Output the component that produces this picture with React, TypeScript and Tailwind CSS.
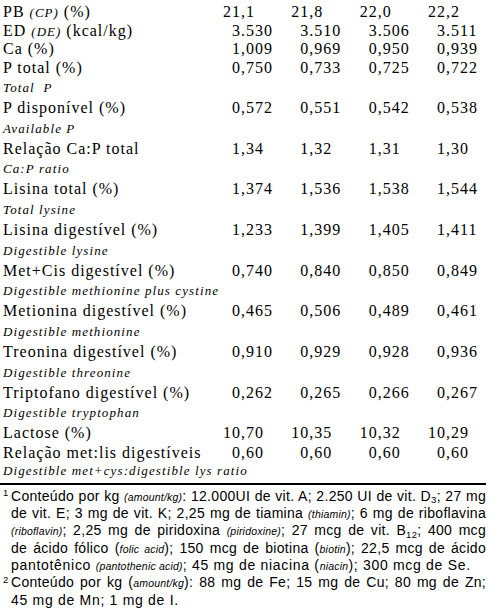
import React from "react";

type Row =
  | { t: "m"; label: React.ReactNode; v: string[]; h: string }
  | { t: "e"; text: string; h: string };

const I = ({ children }: { children: React.ReactNode }) => (
  <span className="italic text-[13px]">{children}</span>
);

const rows: Row[] = [
  { t: "m", label: <>PB <I>(CP)</I> (%)</>, v: ["21,1", "21,8", "22,0", "22,2"], h: "h-[18.5px]" },
  { t: "m", label: <>ED <I>(DE)</I> (kcal/kg)</>, v: ["3.530", "3.510", "3.506", "3.511"], h: "h-[18.5px]" },
  { t: "m", label: <>Ca (%)</>, v: ["1,009", "0,969", "0,950", "0,939"], h: "h-[18.5px]" },
  { t: "m", label: <>P total (%)</>, v: ["0,750", "0,733", "0,725", "0,722"], h: "h-[19px]" },
  { t: "e", text: "Total\u00a0 P", h: "h-[20.33px]" },
  { t: "m", label: <>P disponível (%)</>, v: ["0,572", "0,551", "0,542", "0,538"], h: "h-[20.33px]" },
  { t: "e", text: "Available P", h: "h-[20.33px]" },
  { t: "m", label: <>Relação Ca:P total</>, v: ["1,34", "1,32", "1,31", "1,30"], h: "h-[20.33px]" },
  { t: "e", text: "Ca:P ratio", h: "h-[20.33px]" },
  { t: "m", label: <>Lisina total (%)</>, v: ["1,374", "1,536", "1,538", "1,544"], h: "h-[20.33px]" },
  { t: "e", text: "Total lysine", h: "h-[20.33px]" },
  { t: "m", label: <>Lisina digestível (%)</>, v: ["1,233", "1,399", "1,405", "1,411"], h: "h-[20.33px]" },
  { t: "e", text: "Digestible lysine", h: "h-[20.33px]" },
  { t: "m", label: <>Met+Cis digestível (%)</>, v: ["0,740", "0,840", "0,850", "0,849"], h: "h-[20.33px]" },
  { t: "e", text: "Digestible methionine plus cystine", h: "h-[20.33px]" },
  { t: "m", label: <>Metionina digestível (%)</>, v: ["0,465", "0,506", "0,489", "0,461"], h: "h-[20.33px]" },
  { t: "e", text: "Digestible methionine", h: "h-[20.33px]" },
  { t: "m", label: <>Treonina digestível (%)</>, v: ["0,910", "0,929", "0,928", "0,936"], h: "h-[20.33px]" },
  { t: "e", text: "Digestible threonine", h: "h-[20.33px]" },
  { t: "m", label: <>Triptofano digestível (%)</>, v: ["0,262", "0,265", "0,266", "0,267"], h: "h-[20.33px]" },
  { t: "e", text: "Digestible tryptophan", h: "h-[20.33px]" },
  { t: "m", label: <>Lactose (%)</>, v: ["10,70", "10,35", "10,32", "10,29"], h: "h-[20.33px]" },
  { t: "m", label: <>Relação met:lis digestíveis</>, v: ["0,60", "0,60", "0,60", "0,60"], h: "h-[19px]" },
  { t: "e", text: "Digestible met+cys:digestible lys ratio", h: "h-[17px]" },
];

function Val({ v }: { v: string }) {
  const i = v.search(/[.,]/);
  return (
    <div className="flex">
      <span className="w-[20px] text-right">{v.slice(0, i)}</span>
      <span>{v.slice(i)}</span>
    </div>
  );
}

const FI = ({ children }: { children: React.ReactNode }) => (
  <span className="italic text-[10.5px] tracking-[0.2px]">{children}</span>
);

function FLine({ sup, last, children }: { sup?: string; last?: boolean; children: React.ReactNode }) {
  return (
    <div className="flex h-[17.33px] items-center pr-[5px]">
      <span className="w-[11px] shrink-0 self-start pl-[3px] pt-[1px] text-[9.5px] leading-none">{sup}</span>
      <div
        className={
          last
            ? "flex-1 leading-none whitespace-nowrap tracking-[0.7px]"
            : "flex-1 leading-none text-justify [text-align-last:justify] tracking-[0.3px]"
        }
      >
        {children}
      </div>
    </div>
  );
}

export default function App() {
  return (
    <div className="h-[608px] w-[491px] overflow-hidden bg-white text-black">
      <div className="pl-[3px] pt-[3px] [font-family:'Liberation_Serif',serif] text-[16px] leading-none tracking-[1px]">
        {rows.map((r, k) =>
          r.t === "m" ? (
            <div
              key={k}
              className={`grid grid-cols-[218px_68.33px_68.33px_68.33px_68.34px] items-center ${r.h}`}
            >
              <div className="whitespace-nowrap">{r.label}</div>
              {r.v.map((x, j) => (
                <Val key={j} v={x} />
              ))}
            </div>
          ) : (
            <div key={k} className={`flex items-center ${r.h}`}>
              <span className="whitespace-nowrap text-[13px] italic tracking-[1.1px]">{r.text}</span>
            </div>
          )
        )}
      </div>
      <div className="mt-[4px] w-[486px] border-t-2 border-black" />
      <div className="pt-[1.5px] [font-family:'Liberation_Sans',Arial,sans-serif] text-[14px]">
        <FLine sup="1">
          Conteúdo por kg <FI>(amount/kg)</FI>: 12.000UI de vit. A; 2.250 UI de vit. D
          <sub className="text-[9.5px]">3</sub>; 27 mg
        </FLine>
        <FLine>
          de vit. E; 3 mg de vit. K; 2,25 mg de tiamina <FI>(thiamin)</FI>; 6 mg de riboflavina
        </FLine>
        <FLine>
          <FI>(riboflavin)</FI>; 2,25 mg de piridoxina <FI>(piridoxine)</FI>; 27 mcg de vit. B
          <sub className="text-[9.5px]">12</sub>; 400 mcg
        </FLine>
        <FLine>
          de ácido fólico (<FI>folic acid</FI>); 150 mcg de biotina (<FI>biotin</FI>); 22,5 mcg de ácido
        </FLine>
        <FLine last>
          pantotênico <FI>(pantothenic acid)</FI>; 45 mg de niacina (<FI>niacin</FI>); 300 mcg de Se.
        </FLine>
        <FLine sup="2">
          Conteúdo por kg (<FI>amount/kg</FI>): 88 mg de Fe; 15 mg de Cu; 80 mg de Zn;
        </FLine>
        <FLine last>45 mg de Mn; 1 mg de I.</FLine>
      </div>
    </div>
  );
}
